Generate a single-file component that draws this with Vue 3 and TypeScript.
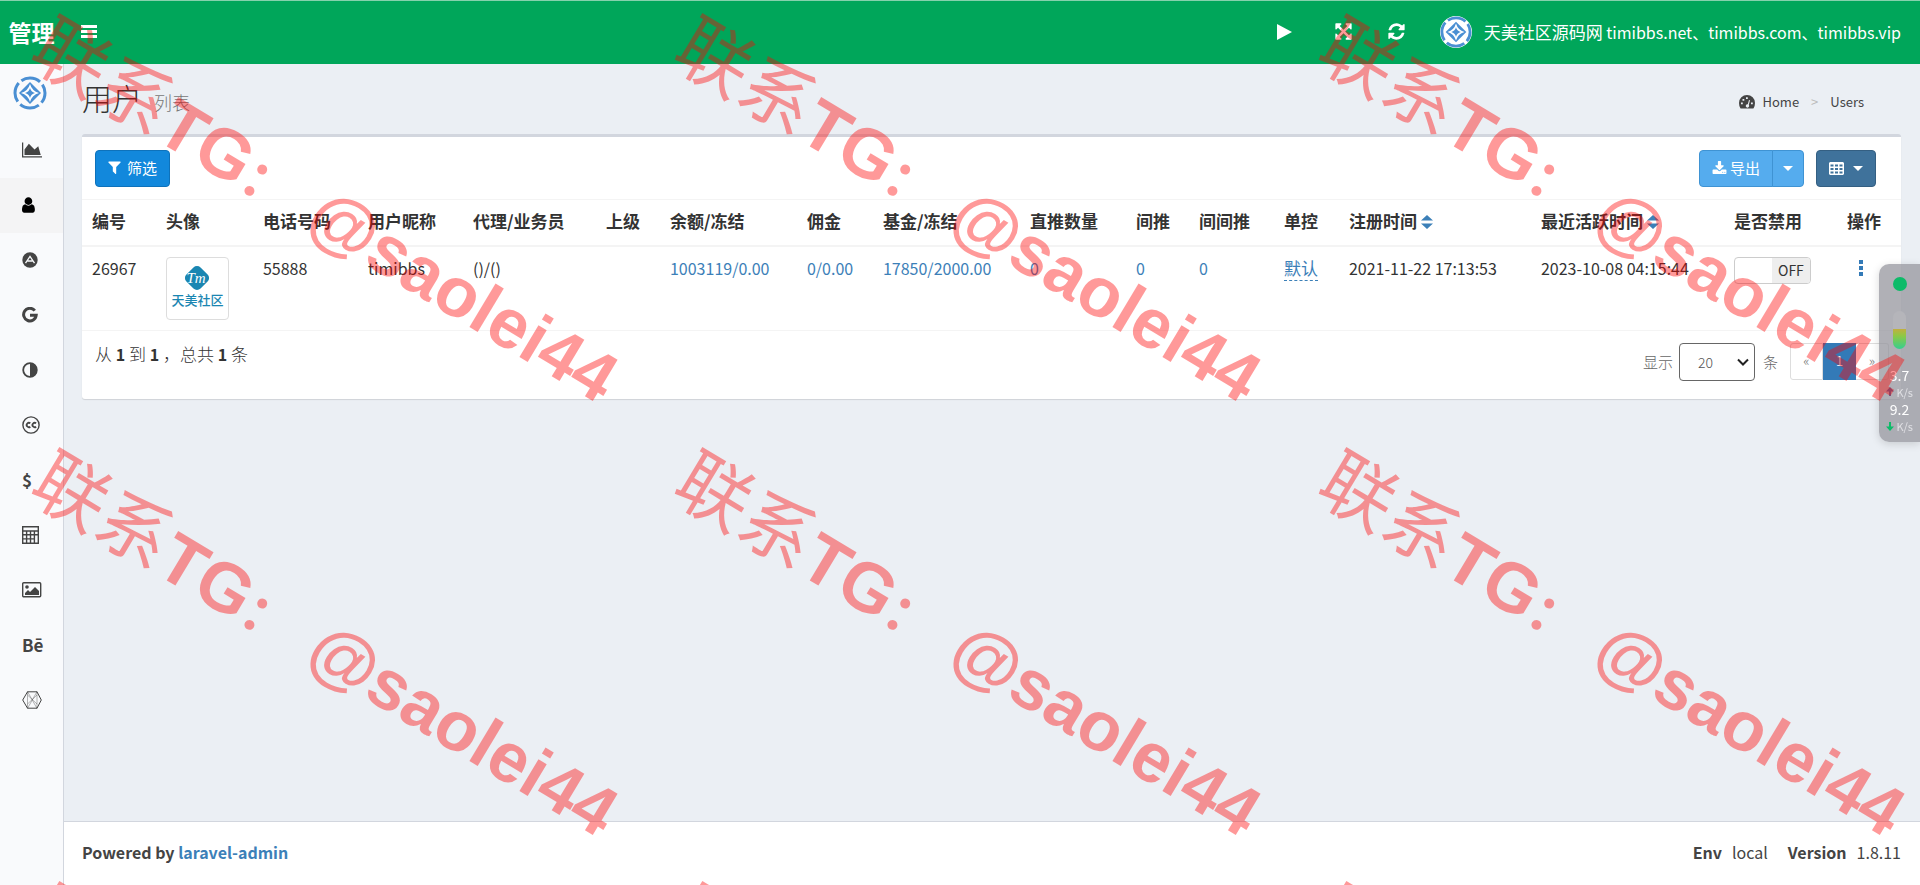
<script setup lang="ts">
import { ref } from 'vue'

interface Column {
  label: string
  width: number
  sortable?: boolean
}

const columns: Column[] = [
  { label: '编号', width: 74 },
  { label: '头像', width: 97 },
  { label: '电话号码', width: 105 },
  { label: '用户昵称', width: 105 },
  { label: '代理/业务员', width: 133 },
  { label: '上级', width: 64 },
  { label: '余额/冻结', width: 137 },
  { label: '佣金', width: 76 },
  { label: '基金/冻结', width: 147 },
  { label: '直推数量', width: 106 },
  { label: '间推', width: 63 },
  { label: '间间推', width: 85 },
  { label: '单控', width: 65 },
  { label: '注册时间', width: 192, sortable: true },
  { label: '最近活跃时间', width: 193, sortable: true },
  { label: '是否禁用', width: 113 },
  { label: '操作', width: 64 },
]
const totalWidth = columns.reduce((sum, c) => sum + c.width, 0)
const share = (c: Column): string => `${(c.width / totalWidth) * 100}%`

const menu: string[] = [
  'chart', 'user', 'adn', 'google', 'adjust', 'cc',
  'dollar', 'calculator', 'image', 'behance', 'codepen',
]
const active = ref('user')
const disabled = ref(false)
const perPage = ref('20')

const stamps = [66, 500, 934].flatMap((y) => [35, 678, 1322].map((x) => ({ x, y })))
</script>

<template>
  <div class="shell">
    <header class="topbar">
      <a class="brand" href="#">管理</a>
      <button class="icon-btn bars" type="button" aria-label="菜单">
        <svg width="16" height="14" viewBox="0 0 16 14"><path d="M0 0h16v3H0zM0 5h16v3H0zM0 10h16v3H0z" /></svg>
      </button>
      <nav class="tools">
        <button class="icon-btn" type="button" aria-label="播放">
          <svg width="15" height="16" viewBox="0 0 15 16"><path d="M0 0l15 8-15 8z" /></svg>
        </button>
        <button class="icon-btn" type="button" aria-label="全屏">
          <svg width="19" height="19" viewBox="0 0 1792 1792"><path d="M1411 541l-355 355 355 355 144-144q29-31 70-14 39 17 39 59v448q0 26-19 45t-45 19h-448q-42 0-59-40-17-39 14-69l144-144-355-355-355 355 144 144q31 30 14 69-17 40-59 40h-448q-26 0-45-19t-19-45v-448q0-42 40-59 39-17 69 14l144 144 355-355-355-355-144 144q-19 19-45 19-12 0-24-5-40-17-40-59v-448q0-26 19-45t45-19h448q42 0 59 40 17 39-14 69l-144 144 355 355 355-355-144-144q-31-30-14-69 17-40 59-40h448q26 0 45 19t19 45v448q0 42-39 59-13 5-25 5-26 0-45-19z" /></svg>
        </button>
        <button class="icon-btn" type="button" aria-label="刷新">
          <svg width="19" height="19" viewBox="0 0 1792 1792"><path d="M1639 1056q0 5-1 7-64 268-268 434.500t-478 166.500q-146 0-282.500-55t-243.500-157l-129 129q-19 19-45 19t-45-19-19-45v-448q0-26 19-45t45-19h448q26 0 45 19t19 45-19 45l-137 137q71 66 161 102t187 36q134 0 250-65t186-179q11-17 53-117 8-23 30-23h192q13 0 22.500 9.500t9.500 22.500zm25-800v448q0 26-19 45t-45 19h-448q-26 0-45-19t-19-45 19-45l138-138q-148-137-349-137-134 0-250 65t-186 179q-11 17-53 117-8 23-30 23h-199q-13 0-22.500-9.500t-9.500-22.500v-7q65-268 270-434.500t480-166.500q146 0 284 55.500t245 156.500l130-129q19-19 45-19t45 19 19 45z" /></svg>
        </button>
        <a class="account" href="#">
          <svg class="emblem" width="32" height="32" viewBox="0 0 34 34">
            <circle class="disc" cx="17" cy="17" r="17" />
            <circle class="ring" cx="17" cy="17" r="15" />
            <path class="gem" d="M17 6l11 11-11 11L6 17z" />
            <path class="spark" d="M17 8q2 7 9 9-7 2-9 9-2-7-9-9 7-2 9-9z" />
            <path class="gem" d="M17 12q1 4 5 5-4 1-5 5-1-4-5-5 4-1 5-5z" />
          </svg>
          <span><span class="cjk">天美社区源码网</span> timibbs.net、timibbs.com、timibbs.vip</span>
        </a>
      </nav>
    </header>

    <div class="body">
      <aside class="sidebar">
        <div class="avatar">
          <svg class="emblem" width="34" height="34" viewBox="0 0 34 34">
            <circle class="ring" cx="17" cy="17" r="15" />
            <path class="gem" d="M17 6l11 11-11 11L6 17z" />
            <path class="spark" d="M17 8q2 7 9 9-7 2-9 9-2-7-9-9 7-2 9-9z" />
            <path class="gem" d="M17 12q1 4 5 5-4 1-5 5-1-4-5-5 4-1 5-5z" />
          </svg>
        </div>
        <nav class="menu">
          <a v-for="item in menu" :key="item" href="#" :class="{ on: item === active }" :aria-label="item" @click.prevent="active = item">
            <svg v-if="item === 'chart'" width="20" height="18" viewBox="0 0 2048 1792"><path d="M2048 1536v128h-2048v-1536h128v1408h1920zm-384-1024l256 896h-1664v-576l448-576 576 576z" /></svg>
            <svg v-else-if="item === 'user'" width="18" height="18" viewBox="256 0 1792 1792"><path d="M1536 1399q0 109-62.500 187t-150.500 78h-854q-88 0-150.500-78t-62.500-187q0-85 8.500-160.500t31.500-152 58.500-131 94-89 134.500-34.500q131 128 313 128t313-128q76 0 134.500 34.500t94 89 58.500 131 31.500 152 8.500 160.500zm-256-887q0 159-112.500 271.500t-271.500 112.500-271.500-112.500-112.500-271.500 112.500-271.500 271.500-112.500 271.500 112.500 112.500 271.500z" /></svg>
            <svg v-else-if="item === 'adn'" width="16" height="16" viewBox="0 0 16 16"><circle cx="8" cy="8" r="7.700" /><path class="cut" d="M3.500 11.200L8 4.500l4.500 6.700M5.500 9h5" /></svg>
            <svg v-else-if="item === 'google'" width="16" height="16" viewBox="0 0 16 16"><path class="line heavy" d="M12.800 3.600A6.300 6.300 0 1 0 14.200 8.200H8" /></svg>
            <svg v-else-if="item === 'adjust'" width="16" height="16" viewBox="0 0 16 16"><circle class="line mid" cx="8" cy="8" r="6.800" /><path d="M8 1v14a7 7 0 0 0 0-14z" /></svg>
            <svg v-else-if="item === 'cc'" width="18" height="18" viewBox="0 0 18 18"><circle class="line" cx="9" cy="9" r="8.100" /><path class="line mid" d="M8.300 7.300A2.200 2.200 0 1 0 8.300 10.700M14.100 7.300A2.200 2.200 0 1 0 14.100 10.700" /></svg>
            <span v-else-if="item === 'dollar'" class="glyph">$</span>
            <svg v-else-if="item === 'calculator'" width="17" height="18" viewBox="0 0 17 18"><path class="line" d="M.700.700h15.600v16.600H.700zM.700 5h15.600M.700 8.800h15.600M.700 12.900h11.400M4.600 5v12.300M8.500 5v12.300M12.400 5v12.300" /></svg>
            <svg v-else-if="item === 'image'" width="20" height="16" viewBox="0 0 20 16"><rect class="line" x=".700" y=".700" width="18" height="14" rx="1" /><circle cx="5" cy="5" r="1.800" /><path d="M3 13v-2l3-3 2 2 5-5 4 4v4z" /></svg>
            <span v-else-if="item === 'behance'" class="glyph">Bē</span>
            <svg v-else width="20" height="18" viewBox="0 0 20 18"><path class="line fine" d="M5.500.800h9.500l4.300 8.200-4.300 8.200H5.500L.700 9z" /><path class="line thin" d="M5.500.600L15 17.400M15 .600L5.500 17.400M5.500.600v16.800M15 .600v16.800M5.500 4L15 13M15 4l-9.500 9" /></svg>
          </a>
        </nav>
      </aside>

      <div class="page">
        <main class="content">
          <div class="heading">
            <h1>用户 <small>列表</small></h1>
            <ol class="crumbs">
              <li>
                <a href="#">
                  <svg width="16" height="14" viewBox="0 0 16 14"><path fill-rule="evenodd" d="M0 8a8 8 0 0 1 16 0q0 3-1.400 5.200-.300.400-.800.400H2.200q-.500 0-.800-.400Q0 11 0 8zm7 2a1.700 1.700 0 1 0 2.800-.200L11 5.300l-1-.300-1.200 4.300Q7.600 9 7 10zM2 7.500v1.800h1.800V7.500zM3.500 4v1.800h1.800V4zM7 2.300v1.800h1.800V2.300zm5 5.200v1.800h1.800V7.500z" /></svg>
                  Home
                </a>
              </li>
              <li class="sep" aria-hidden="true">&gt;</li>
              <li>Users</li>
            </ol>
          </div>

          <section class="box">
            <div class="toolbar">
              <button class="btn filter" type="button">
                <svg width="13" height="13" viewBox="192 192 1408 1472"><path d="M1595 295q17 41-14 70l-493 493v742q0 42-39 59-13 5-25 5-27 0-45-19l-256-256q-19-19-19-45v-486l-493-493q-31-29-14-70 17-39 59-39h1280q42 0 59 39z" /></svg>
                筛选
              </button>
              <div class="actions">
                <div class="group">
                  <button class="btn export" type="button">
                    <svg width="15" height="14" viewBox="0 0 1792 1664"><path d="M1344 1344q0-26-19-45t-45-19-45 19-19 45 19 45 45 19 45-19 19-45zm256 0q0-26-19-45t-45-19-45 19-19 45 19 45 45 19 45-19 19-45zm128-224v320q0 40-28 68t-68 28h-1472q-40 0-68-28t-28-68v-320q0-40 28-68t68-28h465l135 136q58 56 136 56t136-56l136-136h464q40 0 68 28t28 68zm-325-569q17 41-14 70l-448 448q-18 19-45 19t-45-19l-448-448q-31-29-14-70 17-39 59-39h256v-448q0-26 19-45t45-19h256q26 0 45 19t19 45v448h256q42 0 59 39z" /></svg>
                    导出
                  </button>
                  <button class="btn export more" type="button" aria-label="更多">
                    <svg width="10" height="6" viewBox="0 0 10 6"><path d="M0 0h10L5 5z" /></svg>
                  </button>
                </div>
                <button class="btn columns" type="button" aria-label="列">
                  <svg width="15" height="13" viewBox="0 0 15 13"><path fill-rule="evenodd" d="M1 0h13l1 1v11l-1 1H1l-1-1V1zM1.500 2.500v2h3v-2zm4.500 0v2h3v-2zm4.500 0v2h3v-2zM1.500 6v2h3V6zM6 6v2h3V6zm4.500 0v2h3V6zm-9 3.500v2h3v-2zm4.500 0v2h3v-2zm4.500 0v2h3v-2z" /></svg>
                  <svg width="10" height="6" viewBox="0 0 10 6"><path d="M0 0h10L5 5z" /></svg>
                </button>
              </div>
            </div>

            <table class="grid">
              <colgroup>
                <col v-for="c in columns" :key="c.label" :style="{ width: share(c) }" />
              </colgroup>
              <thead>
                <tr>
                  <th v-for="c in columns" :key="c.label" scope="col">
                    {{ c.label }}
                    <a v-if="c.sortable" class="sort" href="#" :aria-label="c.label">
                      <svg width="12" height="14" viewBox="0 0 12 14"><path d="M0 5.500L6 0l6 5.500zM0 8.500h12L6 14z" /></svg>
                    </a>
                  </th>
                </tr>
              </thead>
              <tbody>
                <tr>
                  <td>26967</td>
                  <td>
                    <span class="thumb">
                      <svg width="28" height="28" viewBox="0 0 28 28"><rect x="4" y="4" width="20" height="20" rx="5" transform="rotate(45 14 14)" /><text x="13" y="19" text-anchor="middle">Tm</text></svg>
                      <span>天美社区</span>
                    </span>
                  </td>
                  <td>55888</td>
                  <td>timibbs</td>
                  <td>()/()</td>
                  <td></td>
                  <td><a href="#">1003119/0.00</a></td>
                  <td><a href="#">0/0.00</a></td>
                  <td><a href="#">17850/2000.00</a></td>
                  <td><a href="#">0</a></td>
                  <td><a href="#">0</a></td>
                  <td><a href="#">0</a></td>
                  <td><a class="editable" href="#">默认</a></td>
                  <td>2021-11-22 17:13:53</td>
                  <td>2023-10-08 04:15:44</td>
                  <td>
                    <label class="switch">
                      <input v-model="disabled" type="checkbox" aria-label="是否禁用" />
                      <span>OFF</span>
                    </label>
                  </td>
                  <td>
                    <button class="dots" type="button" aria-label="操作">
                      <svg width="4" height="16" viewBox="0 0 4 16"><path d="M0 0h4v4H0zM0 6h4v4H0zM0 12h4v4H0z" /></svg>
                    </button>
                  </td>
                </tr>
              </tbody>
            </table>

            <div class="pager">
              <p class="summary">从 <b>1</b> 到 <b>1</b> ，总共 <b>1</b> 条</p>
              <div class="paging">
                <label for="per-page">显示</label>
                <span class="select">
                  <select id="per-page" v-model="perPage">
                    <option>20</option>
                    <option>50</option>
                    <option>100</option>
                  </select>
                  <svg width="12" height="8" viewBox="0 0 12 8"><path d="M1 1.500l5 5 5-5" /></svg>
                </span>
                <span>条</span>
                <ul class="pages">
                  <li><a href="#">«</a></li>
                  <li class="current"><a href="#">1</a></li>
                  <li><a href="#">»</a></li>
                </ul>
              </div>
            </div>
          </section>
        </main>

        <footer class="foot">
          <strong>Powered by <a href="#">laravel-admin</a></strong>
          <div class="meta">
            <strong>Env</strong><span>local</span><strong class="ver">Version</strong><span>1.8.11</span>
          </div>
        </footer>
      </div>
    </div>

    <div class="monitor">
      <i class="lamp"></i>
      <i class="gauge"></i>
      <b>3.7</b>
      <span><svg class="up" width="8" height="10" viewBox="0 0 8 10"><path d="M4 0l4 4.500H5V9H3V4.500H0z" /></svg> K/s</span>
      <b>9.2</b>
      <span><svg width="8" height="10" viewBox="0 0 8 10"><path d="M4 10L0 5.500h3V1h2v4.500h3z" /></svg> K/s</span>
    </div>

    <svg class="stamps" aria-hidden="true">
      <g v-for="s in stamps" :key="`${s.x}-${s.y}`" :transform="`translate(${s.x} ${s.y}) rotate(31)`">
        <text class="han" x="-10" y="1">联系</text>
        <text x="138" y="1">TG<tspan class="colon">：</tspan></text>
        <text x="313">@saolei44</text>
      </g>
    </svg>
  </div>
</template>

<style>
body {
  margin: 0;
  background: #ebeff4;
}
</style>

<style scoped>
* {
  box-sizing: border-box;
}
.shell {
  display: flex;
  flex-direction: column;
  min-height: 100vh;
  color: #333;
  font-family: "Noto Sans CJK SC", "Noto Sans", sans-serif;
  font-size: 16px;
  font-weight: 400;
  line-height: 24px;
}
a {
  color: #3c80b8;
  text-decoration: none;
}
button {
  font: inherit;
  cursor: pointer;
}
svg {
  fill: currentColor;
  flex: none;
}
.topbar {
  display: flex;
  align-items: center;
  height: 64px;
  padding-bottom: 2px;
  background: #00a65a;
  border-top: 1px solid #85d1ac;
  color: #fff;
}
.brand {
  width: 63px;
  color: #fff;
  font-size: 23px;
  font-weight: 700;
  line-height: 58px;
  text-align: center;
  white-space: nowrap;
}
.icon-btn {
  display: flex;
  padding: 0;
  border: 0;
  background: none;
  color: #fff;
}
.bars {
  margin-left: 18px;
}
.tools {
  display: flex;
  align-items: center;
  gap: 34px;
  margin-left: auto;
  padding-right: 19px;
}
.tools .icon-btn:first-child {
  margin-right: 8px;
}
.account {
  display: flex;
  align-items: center;
  gap: 12px;
  color: #fff;
  white-space: nowrap;
}
.cjk {
  font-size: 17px;
}
.emblem .disc {
  fill: #fff;
}
.emblem .ring {
  fill: none;
  stroke: #4a8fd3;
  stroke-width: 3;
  stroke-dasharray: 20 3.56;
  stroke-dashoffset: -14;
}
.emblem .gem {
  fill: #4a8fd3;
}
.emblem .spark {
  fill: #fff;
}
.body {
  display: flex;
  flex: 1;
}
.sidebar {
  width: 64px;
  flex: none;
  background: #f9fafc;
  border-right: 1px solid #d2d6de;
}
.avatar {
  display: flex;
  padding: 12px 0 13px 13px;
}
.menu a {
  display: flex;
  align-items: center;
  height: 55px;
  padding: 0 0 2px 22px;
  color: #444;
}
.menu a.on {
  background: #f4f4f5;
  color: #000;
}
.glyph {
  font-size: 17px;
  font-weight: 700;
}
.line {
  fill: none;
  stroke: currentColor;
  stroke-width: 1.4;
}
.mid {
  stroke-width: 1.8;
}
.heavy {
  stroke-width: 3;
}
.fine {
  stroke-width: 1;
}
.thin {
  stroke-width: 0.4;
}
.cut {
  fill: none;
  stroke: #f9fafc;
  stroke-width: 1.3;
}
.page {
  display: flex;
  flex: 1;
  flex-direction: column;
  min-width: 0;
}
.content {
  flex: 1;
  padding: 17px 19px 0 18px;
}
.heading {
  display: flex;
  align-items: center;
  justify-content: space-between;
  height: 36px;
  margin-bottom: 17px;
}
h1 {
  display: flex;
  align-items: baseline;
  gap: 12px;
  margin: 0;
  font-size: 30px;
  font-weight: 300;
  line-height: 34px;
}
small {
  color: #777;
  font-size: 18px;
}
.crumbs {
  display: flex;
  align-items: center;
  gap: 12px;
  margin: 6px 0 0;
  padding: 0 37px 0 0;
  list-style: none;
  color: #444;
  font-size: 13px;
}
.crumbs a {
  display: flex;
  align-items: center;
  gap: 8px;
  color: #444;
}
.sep {
  color: #bbb;
}
.box {
  background: #fff;
  border-top: 3px solid #d2d6de;
  border-radius: 3px;
  box-shadow: 0 1px 1px rgba(0, 0, 0, 0.12);
}
.toolbar {
  display: flex;
  justify-content: space-between;
  padding: 13px 25px 12px 13px;
}
.btn {
  display: flex;
  align-items: center;
  gap: 6px;
  height: 37px;
  padding: 0 12px 2px;
  border: 1px solid;
  border-radius: 4px;
  color: #fff;
  font-size: 15px;
  white-space: nowrap;
}
.filter {
  background: #1288dc;
  border-color: #0e72bb;
}
.actions,
.group {
  display: flex;
}
.actions {
  gap: 12px;
}
.export {
  gap: 3px;
  background: #55acee;
  border-color: #3f93d3;
  border-radius: 4px 0 0 4px;
}
.export.more {
  margin-left: -1px;
  padding: 0 10px;
  border-radius: 0 4px 4px 0;
}
.columns {
  gap: 9px;
  padding: 0 12px;
  background: #3f729b;
  border-color: #345f82;
}
.grid {
  width: 100%;
  table-layout: fixed;
  border-collapse: collapse;
  border-top: 1px solid #f4f4f4;
  border-bottom: 1px solid #f4f4f4;
}
th {
  padding: 9px 0 12px 10px;
  border-bottom: 2px solid #f4f4f4;
  font-size: 17px;
  font-weight: 700;
  text-align: left;
  white-space: nowrap;
}
td {
  height: 84px;
  padding: 9px 0 9px 10px;
  vertical-align: top;
  white-space: nowrap;
}
.sort svg {
  vertical-align: -1px;
}
.editable {
  display: inline-block;
  border-bottom: 1px dashed #3c80b8;
  font-size: 17px;
}
.thumb {
  display: flex;
  flex-direction: column;
  align-items: center;
  width: 63px;
  height: 63px;
  margin-top: 1px;
  padding-top: 6px;
  border: 1px solid #ddd;
  border-radius: 4px;
  color: #1a86b2;
  font-size: 13px;
  font-weight: 500;
  line-height: 16px;
}
.thumb text {
  fill: #fff;
  font-family: "Liberation Serif", serif;
  font-size: 15px;
  font-style: italic;
}
.switch {
  display: flex;
  width: 77px;
  height: 27px;
  margin-top: 1px;
  border: 1px solid #ccc;
  border-radius: 4px;
  overflow: hidden;
}
.switch input {
  flex: 1;
  margin: 0;
  appearance: none;
}
.switch span {
  width: 38px;
  background: #eee;
  font-size: 14px;
  line-height: 25px;
  text-align: center;
}
.dots {
  display: flex;
  margin-left: 12px;
  padding: 4px 0;
  border: 0;
  background: none;
  color: #337ab7;
}
.pager {
  display: flex;
  justify-content: space-between;
  padding: 12px 12px 18px 13px;
}
.summary {
  margin: -1px 0 0;
  font-size: 17px;
  font-weight: 300;
}
.summary b {
  font-size: 16px;
  font-weight: 700;
}
.paging {
  display: flex;
  align-items: center;
  color: #666;
  font-size: 15px;
  font-weight: 300;
}
.select {
  display: flex;
  align-items: center;
  margin: 0 8px 0 6px;
}
.select select {
  width: 76px;
  height: 38px;
  padding: 0 0 0 18px;
  border: 1px solid #666;
  border-radius: 4px;
  background: #fff;
  color: #555;
  font: inherit;
  font-size: 14px;
  appearance: none;
}
.select svg {
  margin-left: -18px;
  margin-right: 6px;
  fill: none;
  stroke: #222;
  stroke-width: 2;
  pointer-events: none;
}
.pages {
  display: flex;
  margin: 0 0 0 12px;
  padding: 0;
  list-style: none;
}
.pages a {
  display: block;
  width: 33px;
  height: 37px;
  border: 1px solid #ddd;
  border-radius: 3px 0 0 3px;
  background: #fff;
  color: #777;
  font-size: 14px;
  line-height: 33px;
  text-align: center;
}
.pages li:last-child a {
  border-left: 0;
  border-radius: 0 3px 3px 0;
}
.pages .current a {
  border-color: #337ab7;
  border-radius: 0;
  background: #337ab7;
  color: #fff;
}
.foot {
  display: flex;
  align-items: center;
  justify-content: space-between;
  height: 64px;
  padding: 0 19px 3px 18px;
  border-top: 1px solid #d2d6de;
  background: #fff;
  color: #444;
}
.meta {
  display: flex;
  gap: 10px;
}
.ver {
  margin-left: 10px;
}
.monitor {
  position: fixed;
  top: 264px;
  right: 0;
  display: flex;
  flex-direction: column;
  align-items: center;
  width: 41px;
  height: 178px;
  padding-top: 13px;
  border-radius: 10px 0 0 10px;
  background: rgba(146, 146, 154, 0.72);
  box-shadow: 0 2px 8px rgba(0, 0, 0, 0.15);
  color: #fff;
}
.lamp {
  width: 14px;
  height: 14px;
  border-radius: 50%;
  background: #0dbb69;
}
.gauge {
  width: 13px;
  height: 38px;
  margin: 20px 0 17px;
  border-radius: 7px;
  background: linear-gradient(#b5b5ba 0 48%, #c0b040 48%, #8fc845 65%, #35cf8f);
}
.monitor b {
  font-weight: 400;
  font-size: 14px;
  line-height: 18px;
}
.monitor span {
  color: #e0e0e4;
  font-size: 11px;
  line-height: 16px;
}
.monitor span svg {
  fill: #0dbb69;
}
.monitor span .up {
  fill: #5a6a9a;
}
.stamps {
  position: fixed;
  inset: 0;
  width: 100%;
  height: 100%;
  fill: rgba(255, 0, 0, 0.4);
  font-family: "Liberation Sans", "Noto Sans CJK SC", sans-serif;
  font-size: 70px;
  font-weight: 700;
  pointer-events: none;
}
.han {
  font-family: "Noto Sans CJK SC", sans-serif;
  font-size: 74px;
  font-weight: 400;
}
.colon {
  font-size: 52px;
}
</style>
